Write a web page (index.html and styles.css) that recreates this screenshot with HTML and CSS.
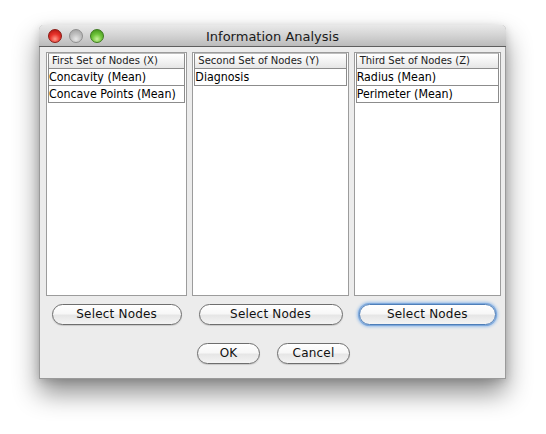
FILE: index.html
```html
<!DOCTYPE html>
<html>
<head>
<meta charset="utf-8">
<link rel="stylesheet" href="styles.css">
</head>
<body>
<div class="stage">
<div class="window">
  <div class="titlebar">
    <div class="lights">
      <span class="light red"></span>
      <span class="light gray"></span>
      <span class="light green"></span>
    </div>
    <div class="title">Information Analysis</div>
    <div></div>
  </div>
  <div class="content">
    <div class="columns">
      <div class="col col1">
        <div class="panel">
          <div class="cell head">First Set of Nodes (X)</div>
          <div class="cell">Concavity (Mean)</div>
          <div class="cell">Concave Points (Mean)</div>
        </div>
        <div class="btnrow"><button class="btn sel1">Select Nodes</button></div>
      </div>
      <div class="col col2">
        <div class="panel">
          <div class="cell head">Second Set of Nodes (Y)</div>
          <div class="cell">Diagnosis</div>
        </div>
        <div class="btnrow"><button class="btn sel2">Select Nodes</button></div>
      </div>
      <div class="col col3">
        <div class="panel">
          <div class="cell head">Third Set of Nodes (Z)</div>
          <div class="cell">Radius (Mean)</div>
          <div class="cell">Perimeter (Mean)</div>
        </div>
        <div class="btnrow"><button class="btn sel3 focus">Select Nodes</button></div>
      </div>
    </div>
    <div class="actions">
      <button class="btn ok">OK</button>
      <button class="btn cancel">Cancel</button>
    </div>
  </div>
</div>
</div>
</body>
</html>
```
FILE: styles.css
```css
html, body {
  margin: 0;
  padding: 0;
  background: #ffffff;
}
body {
  font-family: "DejaVu Sans", "Liberation Sans", sans-serif;
  color: #000;
}
.stage {
  width: 546px;
  height: 434px;
  padding: 25px 0 0 39px;
  box-sizing: border-box;
  overflow: hidden;
}
.window {
  width: 467px;
  height: 354px;
  box-sizing: border-box;
  background: #ececec;
  border: 1px solid #9a9a9a;
  border-top: none;
  border-radius: 5px 5px 0 0;
  box-shadow: 0 14px 26px rgba(0,0,0,0.45), 0 2px 8px rgba(0,0,0,0.15);
  display: flex;
  flex-direction: column;
}
.titlebar {
  height: 21px;
  border-radius: 5px 5px 0 0;
  background: linear-gradient(#e9e9e9, #d3d3d3 50%, #bbbbbb);
  border-bottom: 1px solid #5e5e5e;
  display: grid;
  grid-template-columns: 1fr auto 1fr;
  align-items: center;
  margin: 0 -1px;
}
.lights {
  display: flex;
  gap: 7px;
  padding-left: 9px;
}
.light {
  width: 14px;
  height: 14px;
  border-radius: 50%;
  box-sizing: border-box;
}
.red {
  background: radial-gradient(circle at 50% 75%, #ff9a8a 0, #e8332b 45%, #a8120e 100%);
  border: 1px solid #8a1a14;
}
.gray {
  background: radial-gradient(circle at 50% 75%, #e8e8e8 0, #c2c2c2 45%, #9c9c9c 100%);
  border: 1px solid #8f8f8f;
}
.green {
  background: radial-gradient(circle at 50% 75%, #c8f29a 0, #6fc43a 45%, #3c8a14 100%);
  border: 1px solid #3d7a1e;
}
.title {
  text-align: center;
  font-size: 13px;
  letter-spacing: 0;
  color: #1a1a1a;
  margin-top: 1px;
}
.content {
  padding: 5px 4px 0 6px;
  display: flex;
  flex-direction: column;
}
.columns {
  display: flex;
  gap: 5px;
}
.col1 { width: 142px; }
.col2 { width: 157px; }
.col3 { width: 148px; }
.panel {
  height: 244px;
  box-sizing: border-box;
  background: #fff;
  border: 1px solid #9c9c9c;
  padding: 0 1px;
}
.cell {
  height: 17px;
  box-sizing: border-box;
  border: 1px solid #8c8c8c;
  border-top: none;
  font-family: "DejaVu Sans Condensed", "DejaVu Sans", sans-serif;
  font-size: 12.3px;
  line-height: 16px;
  padding-left: 0;
  white-space: nowrap;
  overflow: hidden;
}
.cell.head {
  border-top: 1px solid #bdbdbd;
  height: 16px;
  font-family: "DejaVu Sans", sans-serif;
  font-size: 10px;
  line-height: 14px;
  padding-left: 3px;
  color: #222;
  background: linear-gradient(#ffffff, #f3f3f3 50%, #e6e6e6);
}
.btnrow {
  display: flex;
  justify-content: center;
  padding-top: 8px;
}
.btn {
  font-family: "DejaVu Sans", "Liberation Sans", sans-serif;
  font-size: 12px;
  letter-spacing: 0.2px;
  color: #111;
  height: 21px;
  padding: 0;
  border: 1px solid #6e6e6e;
  border-radius: 11px;
  background: linear-gradient(#ffffff, #f7f7f7 45%, #e6e6e6 55%, #f4f4f4);
  box-shadow: 0 1px 1px rgba(0,0,0,0.15);
  line-height: 19px;
}
.sel1 { width: 130px; }
.sel2 { width: 144px; }
.sel3 { width: 137px; }
.focus {
  border-color: #4e7eb8;
  box-shadow: 0 0 0 1px #7ea9dc, 0 0 3px 2px #9cc0ea;
}
.actions {
  display: flex;
  justify-content: center;
  gap: 17px;
  padding-top: 18px;
}
.ok { width: 63px; }
.cancel { width: 73px; }
```
